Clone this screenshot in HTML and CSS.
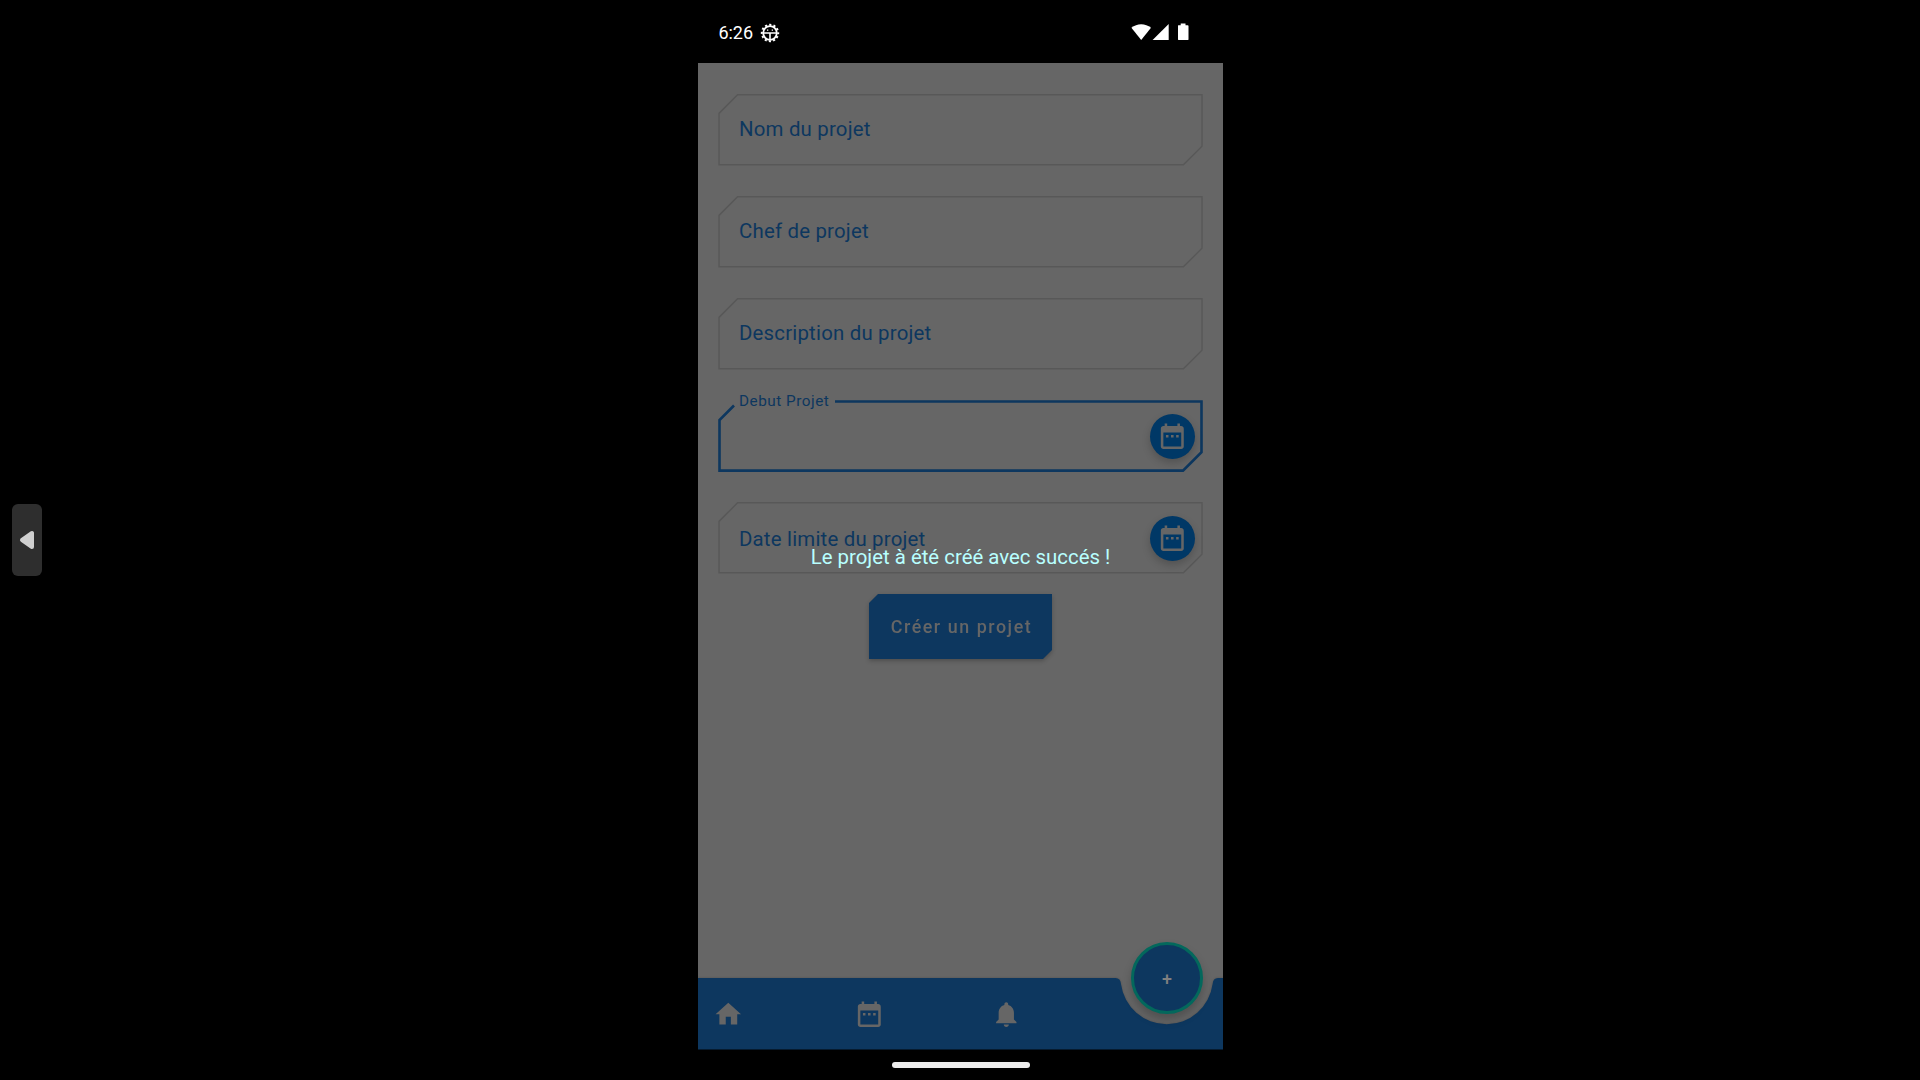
FILE: index.html
```
<!DOCTYPE html>
<html lang="fr">
<head>
<meta charset="utf-8">
<title>Créer un projet</title>
<link rel="stylesheet" href="styles.css">
</head>
<body>
<svg class="defs" width="0" height="0" aria-hidden="true">
  <symbol id="calendar" viewBox="0 0 24 24"><path d="M9 11H7v2h2v-2zm4 0h-2v2h2v-2zm4 0h-2v2h2v-2zm2-7h-1V2h-2v2H8V2H6v2H5c-1.11 0-1.99.9-1.99 2L3 20c0 1.1.89 2 2 2h14c1.1 0 2-.9 2-2V6c0-1.1-.9-2-2-2zm0 16H5V9h14v11z"/></symbol>
  <symbol id="outline" viewBox="0 0 485 72"><path d="M19.6 .8H484V52.2L465.4 70.8H1V19.4Z"/></symbol>
</svg>

<button class="handle" aria-label="Ouvrir le panneau">
  <svg width="16" height="20" viewBox="0 0 16 20"><path d="M13 3v14L3 10Z"/></svg>
</button>

<main class="phone">
  <header class="status">
    <span class="time">6:26</span>
    <svg class="debug" width="20" height="20" viewBox="0 0 20 20">
      <circle class="teeth" cx="10" cy="10" r="8.2"/>
      <circle class="ring" cx="10" cy="10" r="6.8"/>
      <path d="M3.5 9.2h13v1.6h-13zM9.2 10h1.6v6.5H9.200zM7 6.500h1.300v1.300H7zM11.700 6.500h1.300v1.300h-1.300z"/>
    </svg>
    <svg class="signals" width="58" height="18" viewBox="0 0 58 18">
      <path d="M.4 4.8C6 .1 14.4.1 20 4.8L10.2 17Z"/>
      <path d="M21.6 17H37.7V.9Z"/>
      <path d="M47.3 2.2h2.4V.5h4.800v1.700h2.200q.8 0 .8.8v13.200q0 .9-.9.9h-8.700q-.9 0-.9-.9V3q0-.8.300-.8Z"/>
    </svg>
  </header>

  <section class="screen">
    <form class="form">
      <div class="field"><svg class="edge"><use href="#outline"/></svg><label>Nom du projet</label></div>
      <div class="field"><svg class="edge"><use href="#outline"/></svg><label>Chef de projet</label></div>
      <div class="field"><svg class="edge"><use href="#outline"/></svg><label>Description du projet</label></div>
      <div class="field focused">
        <svg class="edge" viewBox="0 0 485 72"><path d="M117 1.500H483.500V52.100L465 70.600H1.500V20L16 5.500"/></svg>
        <label>Debut Projet</label>
        <button type="button" class="pick" aria-label="Choisir une date"><svg class="icon"><use href="#calendar"/></svg></button>
      </div>
      <div class="field last">
        <svg class="edge"><use href="#outline"/></svg><label>Date limite du projet</label>
        <button type="button" class="pick" aria-label="Choisir une date"><svg class="icon"><use href="#calendar"/></svg></button>
      </div>
      <div class="submit-wrap"><button type="button" class="submit">Créer un projet</button></div>
    </form>
    <p class="toast">Le projet à été créé avec succés !</p>

    <nav class="bar">
      <svg class="bar-shape" width="525" height="72" viewBox="0 0 525 72"><path d="M0 0H417.500Q422.500 0 423 6A46.200 46.200 0 0 0 514.600 6Q515 0 520 0H525V71.400H0Z"/></svg>
      <svg class="icon" viewBox="0 0 24 24"><path d="M10 20v-6h4v6h5v-8h3L12 3 2 12h3v8z"/></svg>
      <svg class="icon"><use href="#calendar"/></svg>
      <svg class="icon" viewBox="0 0 24 24"><path d="M12 22c1.100 0 2-.9 2-2h-4c0 1.100.89 2 2 2zm6-6v-5c0-3.070-1.640-5.640-4.500-6.320V4c0-.83-.67-1.500-1.500-1.500s-1.500.67-1.500 1.500v.68C7.630 5.360 6 7.920 6 11v5l-2 2v1h16v-1l-2-2z"/></svg>
      <button class="fab">+</button>
    </nav>
  </section>
  <div class="gesture"><span></span></div>
</main>
</body>
</html>
```
FILE: styles.css
```
* { box-sizing: border-box; }

body {
  margin: 0;
  width: 1920px;
  height: 1080px;
  overflow: hidden;
  background: #000;
  font-family: Roboto, "Liberation Sans", sans-serif;
  display: grid;
  grid-template-columns: 698px 525px 1fr;
  align-items: center;
}

button { border: 0; padding: 0; font-family: inherit; }
.defs { position: absolute; }

.handle {
  width: 30px;
  height: 72px;
  margin-left: 12px;
  border-radius: 6px;
  background: #2e2e2e;
  display: flex;
  align-items: center;
  justify-content: center;
}
.handle path { fill: #d0d0d0; stroke: #d0d0d0; stroke-width: 4; stroke-linejoin: round; }

.phone {
  height: 1080px;
  display: grid;
  grid-template-rows: 63px 986px 31px;
}

.status {
  display: flex;
  align-items: center;
  padding: 3px 34.500px 0 20px;
  color: #fff;
  fill: #fff;
}
.time { font-size: 18px; width: 42px; padding-left: .4px; margin-top: -2px; }
.debug { margin-top: -1px; }
.debug circle { fill: none; stroke: #fff; }
.debug .ring { stroke-width: 1.8; }
.debug .teeth { stroke-width: 2; stroke-dasharray: 2.147 2.147; stroke-dashoffset: 1.07; }
.signals { margin-left: auto; margin-top: -2px; }

.screen {
  background: #666;
  display: flex;
  flex-direction: column;
  justify-content: space-between;
  position: relative;
}

.form {
  padding: 31px 20px 0;
  display: flex;
  flex-direction: column;
  gap: 30px;
}
.field {
  height: 72px;
  display: flex;
  align-items: center;
  justify-content: space-between;
  padding: 0 8px 0 21px;
  position: relative;
}
.edge {
  position: absolute;
  inset: 0;
  width: 485px;
  height: 72px;
  fill: none;
  stroke: #585858;
  stroke-width: 1.4;
}
.field label {
  color: #0d375f;
  font-size: 20.4px;
  line-height: 24px;
  letter-spacing: 0.2px;
  margin-top: -2px;
  position: relative;
}
.last label { margin-top: 1px; }
.focused .edge { stroke: #0d375f; stroke-width: 2.6; }
.focused label {
  align-self: flex-start;
  margin-top: -11px;
  font-size: 15.3px;
  letter-spacing: 0.51px;
}
.pick {
  width: 45px;
  height: 45px;
  border-radius: 50%;
  background: #003866;
  box-shadow: 0 4px 8px rgba(0, 0, 0, .2);
  display: flex;
  align-items: center;
  justify-content: center;
  position: relative;
}
.icon { width: 30.6px; height: 30.6px; fill: #666; flex: none; }

.submit-wrap {
  align-self: center;
  margin-top: -10px;
  filter: drop-shadow(0 2px 2px rgba(0, 0, 0, .24));
}
.submit {
  display: block;
  width: 183px;
  height: 65px;
  background: #0d375f;
  clip-path: polygon(9px 0, 100% 0, 100% calc(100% - 9px), calc(100% - 9px) 100%, 0 100%, 0 9px);
  color: #666;
  font-size: 17.86px;
  font-weight: 500;
  letter-spacing: 1.55px;
  padding-left: 2px;
}

.toast {
  position: absolute;
  inset: 482px 0 auto;
  margin: 0;
  text-align: center;
  font-size: 20.4px;
  line-height: 24px;
  color: #b8ffff;
}

.bar {
  height: 71px;
  position: relative;
  display: grid;
  grid-template-columns: 140.5px 137.700px 1fr 72px;
  align-items: center;
  padding: 0 20px 0 15px;
}
.bar-shape { position: absolute; inset: 0; fill: #0d375f; filter: drop-shadow(0 0 1px rgba(0, 0, 0, .2)); }
.bar .icon { position: relative; }
.fab {
  position: relative;
  top: -36px;
  width: 72px;
  height: 72px;
  border-radius: 50%;
  border: 3px solid #03685c;
  background: #0d375f;
  box-shadow: 0 6px 10px rgba(0, 0, 0, .22);
  color: #808080;
  font-size: 17.86px;
  font-weight: 500;
}

.gesture { display: flex; justify-content: center; padding-top: 13px; }
.gesture span { width: 138px; height: 5.500px; border-radius: 3px; background: #ececec; }
```
